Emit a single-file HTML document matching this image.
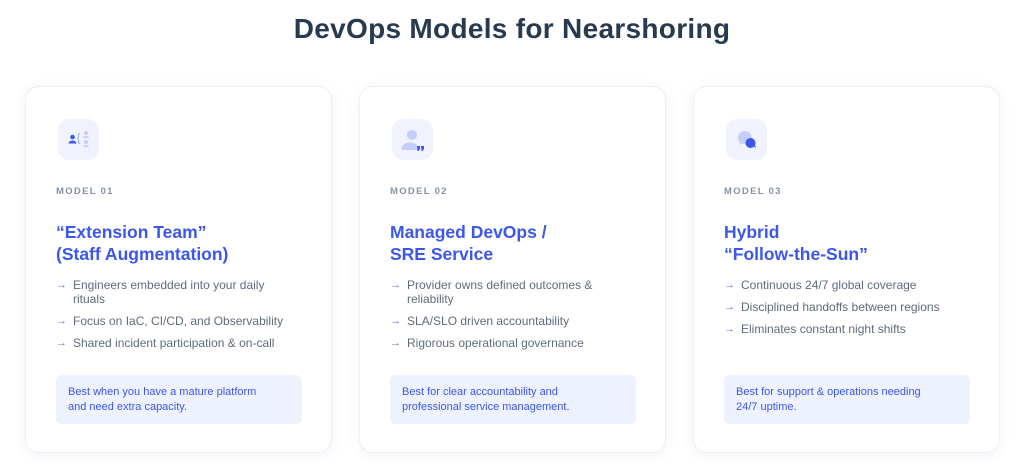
<!DOCTYPE html>
<html><head><style>
*{margin:0;padding:0;box-sizing:border-box}
body{width:1024px;height:476px;background:#fff;font-family:"Liberation Sans",sans-serif;position:relative;overflow:hidden}
h1{position:absolute;top:13px;left:0;width:1024px;text-align:center;font-size:28px;font-weight:bold;color:#283a4f;letter-spacing:0.3px}
.card{position:absolute;top:86px;width:307px;height:367px;background:#fff;border:1px solid #eceff8;border-radius:14px;box-shadow:0 2px 14px rgba(60,80,160,0.07)}
.ic{position:absolute;left:32px;top:32px;width:41px;height:41px;border-radius:11px;background:#f0f3ff}
.lab{position:absolute;left:30px;top:99px;font-size:9.5px;letter-spacing:1.3px;color:#8592a3;font-weight:bold}
.tt{position:absolute;left:30px;top:134px;font-size:17.5px;line-height:22px;font-weight:bold;color:#3b57ee}
ul{position:absolute;left:30px;top:191px;list-style:none;width:236px}
li{position:relative;padding-left:17px;font-size:12px;line-height:14px;color:#5f6b7b;margin-bottom:8px}
li:before{content:"→";position:absolute;left:0;top:0;color:#5b72f2;font-size:11px}
.cb{position:absolute;left:30px;top:288px;width:246px;height:49px;background:#eef2ff;border-radius:6px;padding:10px 30px 10px 12px;font-size:11px;line-height:15px;color:#3b57ee}
</style></head><body>
<h1>DevOps Models for Nearshoring</h1>

<div class="card" style="left:25px">
 <div class="ic"><svg width="41" height="41" viewBox="0 0 41 41">
  <circle cx="14.5" cy="18" r="2.3" fill="#3b57ee"/><path d="M10.5 24.5a4 3 0 0 1 8 0z" fill="#3b57ee"/>
  <path d="M22 14.5q-1.5 0-1.5 1.5v2.5l-1 1 1 1v2.5q0 1.5 1.5 1.5" stroke="#9fb0f8" fill="none" stroke-width="1"/>
  <circle cx="28" cy="14" r="2" fill="#c4cdfb"/><path d="M25 19a3 2 0 0 1 6 0z" fill="#c4cdfb"/>
  <circle cx="28" cy="23" r="2" fill="#c4cdfb"/><path d="M25 28a3 2 0 0 1 6 0z" fill="#c4cdfb"/>
 </svg></div>
 <div class="lab">MODEL 01</div>
 <div class="tt">“Extension Team”<br>(Staff Augmentation)</div>
 <ul><li>Engineers embedded into your daily rituals</li><li>Focus on IaC, CI/CD, and Observability</li><li>Shared incident participation &amp; on-call</li></ul>
 <div class="cb">Best when you have a mature platform and need extra capacity.</div>
</div>

<div class="card" style="left:359px">
 <div class="ic"><svg width="41" height="41" viewBox="0 0 41 41">
  <circle cx="20" cy="16" r="5" fill="#c4cdfb"/><path d="M10 31a8 6 0 0 1 16-3v3z" fill="#c4cdfb"/>
  <path d="M25 27h3v3l-1.5 2h-1zM29 27h3v3l-1.5 2h-1z" fill="#3b57ee"/>
 </svg></div>
 <div class="lab">MODEL 02</div>
 <div class="tt">Managed DevOps /<br>SRE Service</div>
 <ul><li>Provider owns defined outcomes &amp; reliability</li><li>SLA/SLO driven accountability</li><li>Rigorous operational governance</li></ul>
 <div class="cb">Best for clear accountability and professional service management.</div>
</div>

<div class="card" style="left:693px">
 <div class="ic"><svg width="41" height="41" viewBox="0 0 41 41">
  <path d="M19 12a7 6.5 0 1 1 -3 12.5l-3 1.5 1-3a7 6.5 0 0 1 5-11z" fill="#c4cdfb"/>
  <circle cx="24.5" cy="24" r="5" fill="#3b57ee"/><path d="M27 27l3 2-1-3z" fill="#3b57ee"/>
 </svg></div>
 <div class="lab">MODEL 03</div>
 <div class="tt">Hybrid<br>“Follow-the-Sun”</div>
 <ul><li>Continuous 24/7 global coverage</li><li>Disciplined handoffs between regions</li><li>Eliminates constant night shifts</li></ul>
 <div class="cb">Best for support &amp; operations needing 24/7 uptime.</div>
</div>
</body></html>
